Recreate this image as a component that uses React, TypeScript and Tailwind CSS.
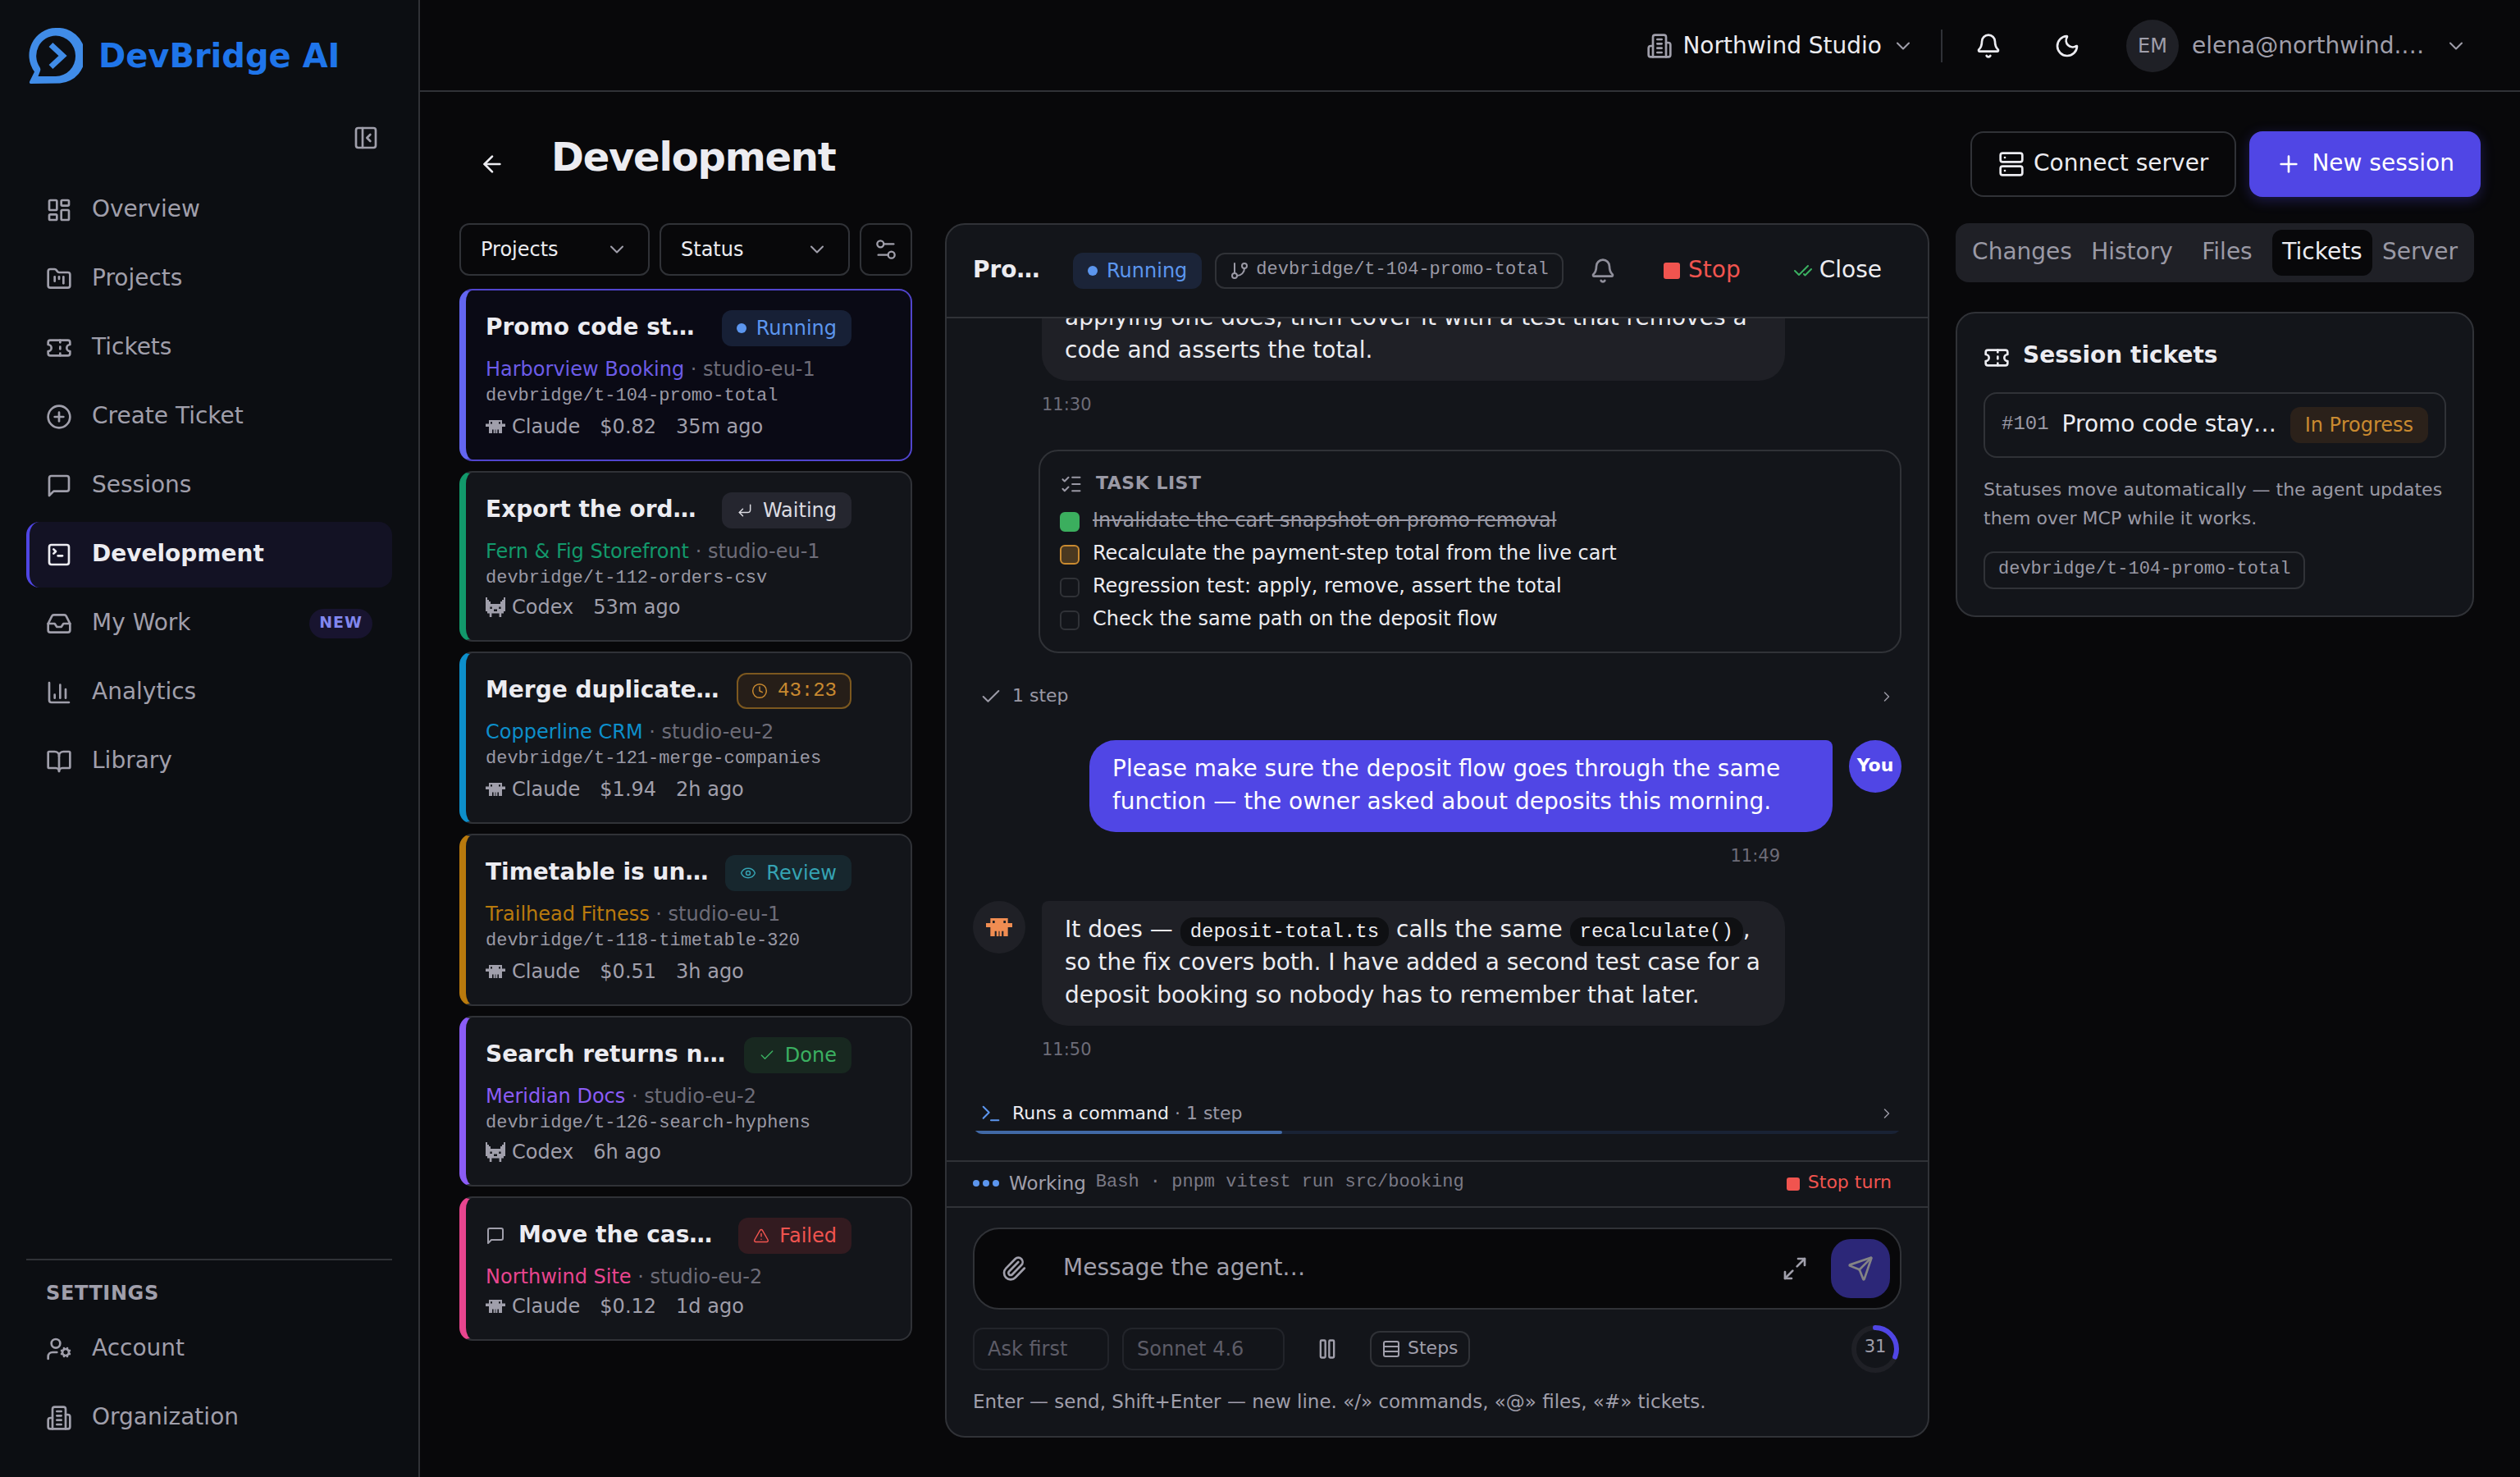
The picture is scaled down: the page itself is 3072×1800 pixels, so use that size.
import type { ReactNode } from 'react';
import {
  ArrowLeft,
  Bell,
  BookOpen,
  ChartColumn,
  Check,
  CheckCheck,
  ChevronDown,
  ChevronRight,
  CirclePlus,
  Clock,
  CornerDownLeft,
  Eye,
  FolderKanban,
  GitBranch,
  Inbox,
  LayoutDashboard,
  ListChecks,
  Maximize2,
  Moon,
  PanelLeftClose,
  Paperclip,
  Pause,
  Plus,
  Rows3,
  Send,
  Server,
  Settings2,
  SquareTerminal,
  Terminal,
  Ticket,
  TriangleAlert,
  UserCog,
} from 'lucide-react';

type IconProps = { className?: string };

function MessageSquare({ className }: IconProps) {
  return (
    <svg viewBox="0 0 24 24" fill="none" stroke="currentColor" strokeWidth={2} strokeLinecap="round" strokeLinejoin="round" className={className}>
      <path d="M21 15a2 2 0 0 1-2 2H7l-4 4V5a2 2 0 0 1 2-2h14a2 2 0 0 1 2 2z" />
    </svg>
  );
}

function Building({ className }: IconProps) {
  return (
    <svg viewBox="0 0 24 24" fill="none" stroke="currentColor" strokeWidth={2} strokeLinecap="round" strokeLinejoin="round" className={className}>
      <path d="M6 22V4a2 2 0 0 1 2-2h8a2 2 0 0 1 2 2v18Z" />
      <path d="M6 12H4a2 2 0 0 0-2 2v6a2 2 0 0 0 2 2h2" />
      <path d="M18 9h2a2 2 0 0 1 2 2v9a2 2 0 0 1-2 2h-2" />
      <path d="M10 6h4M10 10h4M10 14h4M10 18h4" />
    </svg>
  );
}

function Logo() {
  return (
    <svg viewBox="0 0 66 68" className="h-[68px] w-[66px] shrink-0">
      <path
        fillRule="evenodd"
        fill="#408ce8"
        d="M33 0a33 33.5 0 0 1 5 67.6L2 68Q0 67 1.500 64.500L7 53.500A33 33.500 0 0 1 33 0ZM33 9.500a24 24.500 0 0 0-19.500 38.500q1.500 2.500.3 5L11.500 59H33a24 24.700 0 0 0 0-49.500Z"
      />
      <path d="M27 20.500 41.500 34 27 47.500" fill="none" stroke="#408ce8" strokeWidth="7" />
    </svg>
  );
}

function ClaudeIcon({ className }: IconProps) {
  return (
    <svg viewBox="0 0 12 8" fill="currentColor" preserveAspectRatio="none" className={className}>
      <path
        fillRule="evenodd"
        d="M2 0h8v2.200h2v1.800h-2v4H8V5.750H7.200V8H6.200V5.750H5.800V8H4.800V5.750H4V8H2V4H0V2.200h2ZM3 1.100v1.100h1V1.100ZM8 1.100v1.100h1V1.100Z"
      />
    </svg>
  );
}

function CodexIcon({ className }: IconProps) {
  return (
    <svg viewBox="0 0 12 12" fill="currentColor" className={className}>
      <path
        fillRule="evenodd"
        d="M0 0h1v1.500h1v1h1V4h6V2.500h1v-1h1V0h1v8.500h-1v1.300H9.600V12H8.300V9.800H3.700V12H2.400V9.800H1V8.500H0ZM2.700 5.800v1.200h1.200V5.800ZM8.100 5.800v1.200h1.200V5.800ZM5 7.200v1.300h2V7.200Z"
      />
    </svg>
  );
}

const navItems = [
  { label: 'Overview', icon: LayoutDashboard },
  { label: 'Projects', icon: FolderKanban },
  { label: 'Tickets', icon: Ticket },
  { label: 'Create Ticket', icon: CirclePlus },
  { label: 'Sessions', icon: MessageSquare },
  { label: 'Development', icon: SquareTerminal, active: true },
  { label: 'My Work', icon: Inbox, badge: 'NEW' },
  { label: 'Analytics', icon: ChartColumn },
  { label: 'Library', icon: BookOpen },
];

const badgeIcon = 'size-5 shrink-0';

const sessions = [
  {
    title: 'Promo code st…',
    project: 'Harborview Booking',
    color: 'text-[#6c5ce8]',
    border: 'border-[#5145cd] border-l-[#6366f1] bg-[#0a0a15]',
    height: 'h-[210px]',
    server: 'studio-eu-1',
    branch: 'devbridge/t-104-promo-total',
    agent: 'Claude',
    cost: '$0.82',
    time: '35m ago',
    badge: 'Running',
    badgeClass: 'gap-3 bg-[#172036] text-[#5c96ee] border-transparent',
    icon: <span className="size-3 rounded-full bg-[#5c96ee]" />,
  },
  {
    title: 'Export the ord…',
    project: 'Fern & Fig Storefront',
    color: 'text-[#12996b]',
    border: 'border-[#303237] border-l-[#12996b] bg-[#13151a]',
    height: 'h-[208px]',
    server: 'studio-eu-1',
    branch: 'devbridge/t-112-orders-csv',
    agent: 'Codex',
    time: '53m ago',
    badge: 'Waiting',
    badgeClass: 'gap-3 bg-[#25262f] text-[#dcdce2] border-transparent',
    icon: <CornerDownLeft className={badgeIcon} strokeWidth={1.75} />,
  },
  {
    title: 'Merge duplicate…',
    project: 'Copperline CRM',
    color: 'text-[#0d8fcb]',
    border: 'border-[#303237] border-l-[#0d8fcb] bg-[#13151a]',
    height: 'h-[210px]',
    server: 'studio-eu-2',
    branch: 'devbridge/t-121-merge-companies',
    agent: 'Claude',
    cost: '$1.94',
    time: '2h ago',
    badge: '43:23',
    badgeClass: 'gap-3 bg-[#261e18] text-[#c98a30] border-[#7c581f] font-[Liberation_Mono,monospace]',
    icon: <Clock className={badgeIcon} strokeWidth={1.75} />,
  },
  {
    title: 'Timetable is un…',
    project: 'Trailhead Fitness',
    color: 'text-[#b97a0d]',
    border: 'border-[#303237] border-l-[#b97a0d] bg-[#13151a]',
    height: 'h-[210px]',
    server: 'studio-eu-1',
    branch: 'devbridge/t-118-timetable-320',
    agent: 'Claude',
    cost: '$0.51',
    time: '3h ago',
    badge: 'Review',
    badgeClass: 'gap-3 bg-[#17272e] text-[#35a3b3] border-transparent',
    icon: <Eye className={badgeIcon} strokeWidth={1.75} />,
  },
  {
    title: 'Search returns n…',
    project: 'Meridian Docs',
    color: 'text-[#8b5cf6]',
    border: 'border-[#303237] border-l-[#8b5cf6] bg-[#13151a]',
    height: 'h-[208px]',
    server: 'studio-eu-2',
    branch: 'devbridge/t-126-search-hyphens',
    agent: 'Codex',
    time: '6h ago',
    badge: 'Done',
    badgeClass: 'gap-3 bg-[#182820] text-[#3bb061] border-transparent',
    icon: <Check className={badgeIcon} strokeWidth={1.75} />,
  },
  {
    title: 'Move the cas…',
    project: 'Northwind Site',
    color: 'text-[#e8458f]',
    border: 'border-[#303237] border-l-[#e8458f] bg-[#13151a]',
    height: 'h-[176px]',
    server: 'studio-eu-2',
    agent: 'Claude',
    cost: '$0.12',
    time: '1d ago',
    badge: 'Failed',
    badgeClass: 'gap-3 bg-[#331b20] text-[#f0544f] border-transparent',
    icon: <TriangleAlert className={badgeIcon} strokeWidth={1.75} />,
    chat: true,
  },
];

const tasks = [
  { text: 'Invalidate the cart snapshot on promo removal', box: 'bg-[#3bae5e] border-[#3bae5e]', textClass: 'text-[#9a99a5] line-through' },
  { text: 'Recalculate the payment-step total from the live cart', box: 'bg-[#4a3820] border-[#c98a30]', textClass: 'text-[#ececf1]' },
  { text: 'Regression test: apply, remove, assert the total', box: 'border-[#303237]', textClass: 'text-[#ececf1]' },
  { text: 'Check the same path on the deposit flow', box: 'border-[#303237]', textClass: 'text-[#ececf1]' },
];

const tabs = [
  { label: 'Changes', width: 'w-[146px]' },
  { label: 'History', width: 'w-[122px]' },
  { label: 'Files', width: 'w-[110px]' },
  { label: 'Tickets', width: 'w-[122px]', active: true },
  { label: 'Server', width: 'w-[116px]' },
];

function NavItem({ icon: Icon, label, active, badge }: { icon: any; label: string; active?: boolean; badge?: string }) {
  return (
    <a
      className={
        active
          ? 'flex h-20 items-center gap-6 rounded-2xl border-l-4 border-[#5046e5] bg-[#131224] pl-5 pr-6 text-[28px] font-bold text-[#ececf1]'
          : 'flex h-20 items-center gap-6 rounded-2xl border-l-4 border-transparent pl-5 pr-6 text-[28px] text-[#a09fab]'
      }
    >
      <Icon className="size-8 shrink-0" />
      <span className="flex-1 pb-0.5 leading-9">{label}</span>
      {badge && (
        <span className="flex h-9 items-center rounded-full bg-[#18142f] px-3 pb-1 text-[19px] font-bold tracking-[1px] text-[#8187ee]">
          {badge}
        </span>
      )}
    </a>
  );
}

function Sidebar() {
  return (
    <aside className="flex h-full w-[512px] shrink-0 flex-col border-r-2 border-[#303237] bg-[#0c0e12] px-8 pb-8">
      <div className="mt-[34px] ml-[3px] flex h-[68px] items-center gap-[19px]">
        <Logo />
        <span className="text-[40px] leading-[48px] font-bold text-[#1f75ea]">DevBridge AI</span>
      </div>
      <div className="mt-[50px] flex justify-end pr-4 text-[#a09fab]">
        <PanelLeftClose className="size-8" />
      </div>
      <nav className="mt-8 flex flex-col gap-1">
        {navItems.map((item) => (
          <NavItem key={item.label} {...item} />
        ))}
      </nav>
      <div className="mt-auto flex flex-col gap-1 border-t-2 border-[#303237]">
        <div className="flex h-[64px] items-center pt-4 pl-6 text-[24px] leading-8 font-bold tracking-[0.6px] text-[#a09fab]">SETTINGS</div>
        <NavItem icon={UserCog} label="Account" />
        <NavItem icon={Building} label="Organization" />
      </div>
    </aside>
  );
}

function Topbar() {
  return (
    <header className="flex h-28 shrink-0 items-center justify-end border-b-2 border-[#303237] pt-0.5 pr-16 text-[28px] text-[#ececf1]">
      <Building className="size-8 text-[#a09fab]" />
      <span className="ml-3 pb-px leading-9">Northwind Studio</span>
      <ChevronDown className="ml-3 size-7 text-[#a09fab]" strokeWidth={1.75} />
      <span className="ml-8 h-10 w-0.5 bg-[#303237]" />
      <Bell className="ml-10 size-8" />
      <Moon className="ml-16 size-8" />
      <span className="ml-14 flex size-16 items-center justify-center rounded-full bg-[#1f2026] text-[24px] text-[#a09fab]">EM</span>
      <span className="ml-4 w-[292px] pb-px leading-9 text-[#a09fab]">elena@northwind.…</span>
      <ChevronDown className="ml-4 size-7 text-[#a09fab]" strokeWidth={1.75} />
    </header>
  );
}

function TitleRow() {
  return (
    <div className="flex h-20 items-center text-[28px] text-[#ececf1]">
      <ArrowLeft className="ml-6 size-8" />
      <h1 className="ml-14 flex-1 pb-[19px] text-[48px] leading-[56px] font-bold tracking-tight">Development</h1>
      <button className="flex h-20 items-center gap-[11px] rounded-2xl border-2 border-[#303237] px-8">
        <Server className="size-8" />
        <span className="pb-0.5 leading-9">Connect server</span>
      </button>
      <button className="ml-4 flex h-20 items-center gap-3 rounded-2xl bg-[#5046e5] px-8 text-white shadow-[0_4px_16px_rgba(80,70,229,0.3)]">
        <Plus className="size-8" />
        <span className="pb-0.5 leading-9">New session</span>
      </button>
    </div>
  );
}

function FilterSelect({ label }: { label: string }) {
  return (
    <div className="flex h-16 w-[232px] items-center justify-between rounded-xl border-2 border-[#303237] px-6 text-[24px] text-[#ececf1]">
      <span className="leading-8">{label}</span>
      <ChevronDown className="size-7 text-[#a09fab]" strokeWidth={1.75} />
    </div>
  );
}

function StatusBadge({ className, children }: { className: string; children: ReactNode }) {
  return (
    <span className={`flex h-11 shrink-0 items-center rounded-xl border-2 px-4 text-[24px] leading-8 ${className}`}>{children}</span>
  );
}

function SessionList() {
  return (
    <section className="flex w-[552px] shrink-0 flex-col gap-3">
      <div className="mb-1 flex gap-3">
        <FilterSelect label="Projects" />
        <FilterSelect label="Status" />
        <div className="flex size-16 items-center justify-center rounded-xl border-2 border-[#303237] text-[#a09fab]">
          <Settings2 className="size-8" strokeWidth={1.75} />
        </div>
      </div>
      {sessions.map((s) => (
        <article key={s.title} className={`flex flex-col rounded-2xl border-2 border-l-8 p-6 ${s.height} ${s.border}`}>
          <div className="flex h-11 items-center pr-12">
            {s.chat && <MessageSquare className="mr-4 size-6 text-[#a09fab]" />}
            <h3 className="flex-1 pb-0.5 text-[28px] leading-9 font-bold whitespace-nowrap text-[#ececf1]">{s.title}</h3>
            <StatusBadge className={s.badgeClass}>
              {s.icon}
              <span>{s.badge}</span>
            </StatusBadge>
          </div>
          <p className="mt-2.5 h-9 text-[24px] leading-9 text-[#6d6c78]">
            <span className={s.color}>{s.project}</span> · {s.server}
          </p>
          {s.branch && <p className="h-[34px] font-[Liberation_Mono,monospace] text-[22px] leading-[30px] text-[#9a99a5]">{s.branch}</p>}
          <p className="mt-0.5 flex h-8 items-center gap-6 text-[24px] leading-8 text-[#a09fab]">
            <span className="flex items-center gap-2">
              {s.agent === 'Claude' ? <ClaudeIcon className="h-4 w-6" /> : <CodexIcon className="size-6" />}
              {s.agent}
            </span>
            {s.cost && <span>{s.cost}</span>}
            <span>{s.time}</span>
          </p>
        </article>
      ))}
    </section>
  );
}

function StepRow({ icon, children, running }: { icon: ReactNode; children: ReactNode; running?: boolean }) {
  return (
    <div className="relative flex h-[50px] shrink-0 items-center overflow-hidden rounded-xl px-2 text-[22px] text-[#9a99a5]">
      {icon}
      <span className={`ml-3 flex-1 leading-8 ${running ? '' : 'pb-[3px]'}`}>{children}</span>
      <ChevronRight className="size-5" strokeWidth={1.75} />
      {running && (
        <div className="absolute inset-x-0 bottom-0 h-1 bg-[#192235]">
          <div className="h-1 w-1/3 rounded-r-full bg-[#4169a6]" />
        </div>
      )}
    </div>
  );
}

function Code({ children }: { children: ReactNode }) {
  return <code className="rounded-2xl bg-[#0f1013] px-3 py-1 font-[Liberation_Mono,monospace] text-[24px] leading-none">{children}</code>;
}

function Conversation() {
  return (
    <div className="flex min-h-0 flex-1 flex-col justify-end overflow-hidden px-8 pb-8">
      <div className="ml-[84px] w-[906px] shrink-0 rounded-[32px] bg-[#1f2026] px-7 pt-[15px] pb-[17px] text-[28px] leading-10 text-[#ececf1]">
        applying one does, then cover it with a test that removes a
        <br />
        code and asserts the total.
      </div>
      <p className="mt-[13px] ml-[84px] h-[31px] shrink-0 text-[21px] leading-8 text-[#6d6c78]">11:30</p>

      <div className="mt-10 ml-20 h-[248px] shrink-0 rounded-3xl border-2 border-[#303237] px-6 pt-[22px]">
        <div className="flex h-9 items-center gap-4 text-[22px] font-bold tracking-[0.5px] text-[#9a99a5]">
          <ListChecks className="size-7" strokeWidth={1.75} />
          <span className="pb-0.5 leading-8">TASK LIST</span>
        </div>
        <ul className="mt-2 text-[24px]">
          {tasks.map((t) => (
            <li key={t.text} className="flex h-10 items-center gap-4">
              <span className={`size-6 rounded-md border-2 ${t.box}`} />
              <span className={`pb-1 leading-8 ${t.textClass}`}>{t.text}</span>
            </li>
          ))}
        </ul>
      </div>

      <div className="mt-7 flex shrink-0 flex-col">
        <StepRow icon={<Check className="size-7" strokeWidth={1.75} />}>1 step</StepRow>
      </div>

      <div className="mt-7 flex shrink-0 items-start justify-end gap-5">
        <div className="w-[906px] rounded-[32px] rounded-tr-lg bg-[#5046e5] px-7 pt-[15px] pb-[17px] text-[28px] leading-10 text-white">
          Please make sure the deposit flow goes through the same function — the owner asked about deposits this morning.
        </div>
        <span className="flex size-16 items-center justify-center rounded-full bg-[#5046e5] pb-[3px] text-[22px] font-bold text-white">You</span>
      </div>
      <p className="mt-[13px] mr-[148px] h-[31px] shrink-0 text-right text-[21px] leading-8 text-[#6d6c78]">11:49</p>

      <div className="mt-10 flex shrink-0 items-start gap-5">
        <span className="flex size-16 items-center justify-center rounded-full bg-[#1f2026] text-[#f08d52]">
          <ClaudeIcon className="h-[22px] w-8" />
        </span>
        <div className="w-[906px] rounded-[32px] rounded-tl-lg bg-[#1f2026] px-7 pt-[15px] pb-[17px] text-[28px] leading-10 text-[#ececf1]">
          It does — <Code>deposit-total.ts</Code> calls the same <Code>recalculate()</Code>,
          <br />
          so the fix covers both. I have added a second test case for a
          <br />
          deposit booking so nobody has to remember that later.
        </div>
      </div>
      <p className="mt-[13px] ml-[84px] h-[31px] shrink-0 text-[21px] leading-8 text-[#6d6c78]">11:50</p>

      <div className="mt-[38px] flex shrink-0 flex-col">
        <StepRow running icon={<Terminal className="size-7 text-[#5c96ee]" strokeWidth={1.75} />}>
          <span className="text-[#ececf1]">Runs a command</span> · 1 step
        </StepRow>
      </div>
    </div>
  );
}

function Composer() {
  return (
    <div className="shrink-0 border-t-2 border-[#303237] px-8 pt-6 pb-[26px]">
      <div className="flex h-[100px] items-center rounded-[32px] border-2 border-[#303237] bg-[#08080a] pr-3 pl-8 text-[#a09fab]">
        <Paperclip className="size-8" />
        <span className="ml-11 flex-1 pb-0.5 text-[28px] leading-9">Message the agent…</span>
        <Maximize2 className="size-8" />
        <button className="ml-7 flex size-[72px] items-center justify-center rounded-3xl bg-[#5046e5] text-white opacity-50">
          <Send className="size-8" />
        </button>
      </div>
      <div className="mt-4 flex h-16 items-center text-[24px]">
        <span className="flex h-[52px] w-[166px] items-center rounded-xl border-2 border-[#22242a] px-4 text-[#5d5c67]">Ask first</span>
        <span className="ml-4 flex h-[52px] w-[198px] items-center rounded-xl border-2 border-[#22242a] px-4 text-[#5d5c67]">Sonnet 4.6</span>
        <Pause className="ml-[38px] size-7 text-[#a09fab]" />
        <span className="ml-[38px] flex h-11 items-center gap-2 rounded-xl border-2 border-[#303237] px-3 text-[22px] text-[#a09fab]">
          <Rows3 className="size-6" />
          <span className="pb-0.5 leading-8">Steps</span>
        </span>
        <span className="relative ml-auto flex size-16 items-center justify-center text-[21px] text-[#a09fab]">
          <svg viewBox="0 0 64 64" fill="none" strokeWidth="6" className="absolute inset-0">
            <circle cx="32" cy="32" r="26" stroke="#1f2026" />
            <circle cx="32" cy="32" r="26" stroke="#5046e5" pathLength="100" strokeDasharray="31 100" strokeLinecap="round" transform="rotate(-90 32 32)" />
          </svg>
          <span className="pb-1">31</span>
        </span>
      </div>
      <p className="mt-4 h-8 text-[23px] leading-8 text-[#a09fab]">
        Enter — send, Shift+Enter — new line. «/» commands, «@» files, «#» tickets.
      </p>
    </div>
  );
}

function SessionPanel() {
  return (
    <section className="ml-10 flex h-[1480px] w-[1200px] shrink-0 flex-col rounded-3xl border-2 border-[#303237] bg-[#13151a]">
      <div className="flex h-[114px] shrink-0 items-center border-b-2 border-[#303237] px-8 text-[28px] text-[#ececf1]">
        <h2 className="w-[122px] pb-0.5 leading-9 font-bold">Pro…</h2>
        <StatusBadge className="gap-[11px] border-transparent bg-[#1b2438] text-[#5c96ee]">
          <span className="size-3 rounded-full bg-[#5c96ee]" />
          <span>Running</span>
        </StatusBadge>
        <span className="ml-4 flex h-11 items-center gap-2 rounded-xl border-2 border-[#303237] px-4 font-[Liberation_Mono,monospace] text-[22px] text-[#9a99a5]">
          <GitBranch className="size-6" />
          <span className="pb-[3px] leading-8">devbridge/t-104-promo-total</span>
        </span>
        <Bell className="ml-8 size-8 text-[#8f8e9a]" />
        <button className="ml-auto flex items-center text-[#f0544f]">
          <span className="mr-2.5 size-5 rounded-[3px] bg-[#f0544f]" />
          <span className="pb-0.5 leading-9">Stop</span>
        </button>
        <button className="mr-6 ml-16 flex items-center gap-2">
          <CheckCheck className="size-6 text-[#3bb061]" />
          <span className="pb-0.5 leading-9">Close</span>
        </button>
      </div>
      <Conversation />
      <div className="flex h-14 shrink-0 items-center border-t-2 border-[#303237] px-8 text-[22px]">
        <span className="flex gap-1 pb-0.5">
          <span className="size-2 rounded-full bg-[#5c96ee]" />
          <span className="size-2 rounded-full bg-[#5c96ee]" />
          <span className="size-2 rounded-full bg-[#5c96ee]" />
        </span>
        <span className="ml-3 pb-0.5 text-[23px] leading-8 text-[#a09fab]">Working</span>
        <span className="ml-3 pb-1 font-[Liberation_Mono,monospace] leading-8 text-[#7a7985]">Bash · pnpm vitest run src/booking</span>
        <span className="mr-3 ml-auto flex items-center gap-2.5 text-[#f0544f]">
          <span className="size-4 rounded-[3px] bg-[#f0544f]" />
          <span className="pb-1 leading-8">Stop turn</span>
        </span>
      </div>
      <Composer />
    </section>
  );
}

function TicketsPanel() {
  return (
    <section className="ml-8 w-[632px] shrink-0">
      <div className="flex h-[72px] items-center rounded-2xl bg-[#1f2026] px-2 text-[28px] text-[#9a99a5]">
        {tabs.map((t) => (
          <span
            key={t.label}
            className={`flex h-14 items-center justify-center rounded-xl pb-0.5 ${t.width} ${t.active ? 'bg-[#08080a] text-[#ececf1]' : ''}`}
          >
            {t.label}
          </span>
        ))}
      </div>
      <div className="mt-9 h-[372px] rounded-3xl border-2 border-[#303237] bg-[#13151a] p-8">
        <div className="mt-1 flex h-9 items-center gap-4 text-[28px] font-bold text-[#ececf1]">
          <Ticket className="size-8" />
          <span className="pb-1.5 leading-9">Session tickets</span>
        </div>
        <div className="mt-6 flex h-20 items-center rounded-2xl border-2 border-[#303237] px-5">
          <span className="pb-0.5 font-[Liberation_Mono,monospace] text-[24px] text-[#9a99a5]">#101</span>
          <span className="ml-4 flex-1 pb-0.5 text-[28px] leading-9 whitespace-nowrap text-[#ececf1]">Promo code stay…</span>
          <StatusBadge className="border-transparent bg-[#2b211a] text-[#c98a30]">In Progress</StatusBadge>
        </div>
        <p className="mt-[21px] text-[22px] leading-[35px] text-[#9a99a5]">
          Statuses move automatically — the agent updates
          <br />
          them over MCP while it works.
        </p>
        <span className="mt-[23px] inline-flex h-[46px] items-center rounded-xl border-2 border-[#303237] px-4 pb-1 font-[Liberation_Mono,monospace] text-[22px] text-[#9a99a5]">
          devbridge/t-104-promo-total
        </span>
      </div>
    </section>
  );
}

export default function App() {
  return (
    <div className="flex h-[1800px] w-[3072px] overflow-hidden bg-[#08080a] font-['DejaVu_Sans',sans-serif]">
      <Sidebar />
      <div className="flex min-w-0 flex-1 flex-col">
        <Topbar />
        <main className="flex-1 px-12 pt-12">
          <TitleRow />
          <div className="mt-8 flex">
            <SessionList />
            <SessionPanel />
            <TicketsPanel />
          </div>
        </main>
      </div>
    </div>
  );
}
